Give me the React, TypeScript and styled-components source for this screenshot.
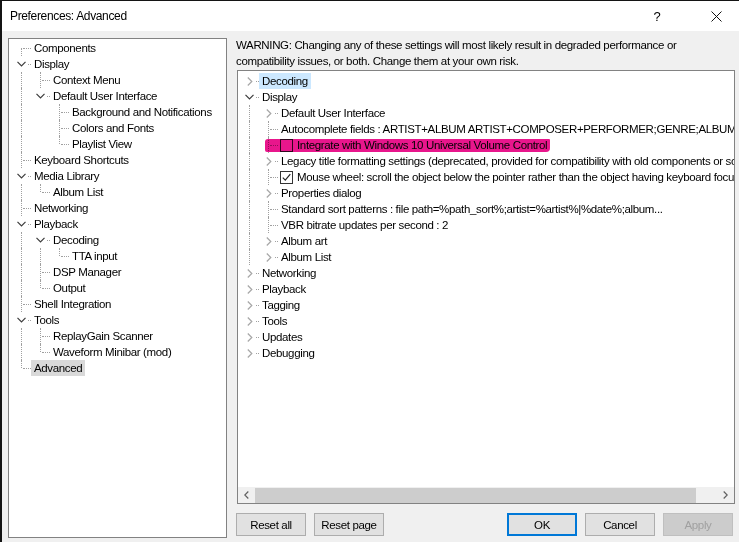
import React from "react";
import styled, { createGlobalStyle } from "styled-components";

type TreeNode = {
  label: string;
  open?: boolean;
  closed?: boolean;
  children?: TreeNode[];
  check?: "on" | "off";
  selected?: boolean;
  hot?: boolean;
  marked?: boolean;
};

type FlatRow = {
  node: TreeNode;
  depth: number;
  trail: boolean[];
  kind: "tee" | "last" | "first";
};

const leftTree: TreeNode[] = [
  { label: "Components" },
  {
    label: "Display",
    open: true,
    children: [
      { label: "Context Menu" },
      {
        label: "Default User Interface",
        open: true,
        children: [
          { label: "Background and Notifications" },
          { label: "Colors and Fonts" },
          { label: "Playlist View" },
        ],
      },
    ],
  },
  { label: "Keyboard Shortcuts" },
  { label: "Media Library", open: true, children: [{ label: "Album List" }] },
  { label: "Networking" },
  {
    label: "Playback",
    open: true,
    children: [
      { label: "Decoding", open: true, children: [{ label: "TTA input" }] },
      { label: "DSP Manager" },
      { label: "Output" },
    ],
  },
  { label: "Shell Integration" },
  {
    label: "Tools",
    open: true,
    children: [{ label: "ReplayGain Scanner" }, { label: "Waveform Minibar (mod)" }],
  },
  { label: "Advanced", selected: true },
];

const rightTree: TreeNode[] = [
  { label: "Decoding", closed: true, hot: true },
  {
    label: "Display",
    open: true,
    children: [
      { label: "Default User Interface", closed: true },
      { label: "Autocomplete fields : ARTIST+ALBUM ARTIST+COMPOSER+PERFORMER;GENRE;ALBUM..." },
      { label: "Integrate with Windows 10 Universal Volume Control", check: "off", marked: true },
      {
        label:
          "Legacy title formatting settings (deprecated, provided for compatibility with old components or scripts)",
        closed: true,
      },
      {
        label: "Mouse wheel: scroll the object below the pointer rather than the object having keyboard focus",
        check: "on",
      },
      { label: "Properties dialog", closed: true },
      { label: "Standard sort patterns : file path=%path_sort%;artist=%artist%|%date%;album..." },
      { label: "VBR bitrate updates per second : 2" },
      { label: "Album art", closed: true },
      { label: "Album List", closed: true },
    ],
  },
  { label: "Networking", closed: true },
  { label: "Playback", closed: true },
  { label: "Tagging", closed: true },
  { label: "Tools", closed: true },
  { label: "Updates", closed: true },
  { label: "Debugging", closed: true },
];

function flatten(nodes: TreeNode[], depth = 0, trail: boolean[] = []): FlatRow[] {
  const out: FlatRow[] = [];
  nodes.forEach((node, i) => {
    const last = i === nodes.length - 1;
    const kind = last ? "last" : depth === 0 && i === 0 ? "first" : "tee";
    out.push({ node, depth, trail, kind });
    if (node.open && node.children) {
      out.push(...flatten(node.children, depth + 1, [...trail, !last]));
    }
  });
  return out;
}

const GlobalStyle = createGlobalStyle`
  html, body {
    margin: 0;
    padding: 0;
    background: #f0f0f0;
  }
  body {
    font-family: "Liberation Sans", Arial, sans-serif;
    font-size: 11.5px;
    letter-spacing: -0.35px;
    color: #000;
  }
`;

const Frame = styled.div`
  width: 737px;
  height: 541px;
  border-left: 2px solid #141414;
  border-top: 1px solid #141414;
  background: #f0f0f0;
  display: flex;
  flex-direction: column;
  overflow: hidden;
`;

const TitleBar = styled.div`
  height: 30px;
  flex: none;
  background: #fff;
  display: flex;
  align-items: center;
  padding-left: 8px;
`;

const Title = styled.span`
  flex: 1;
  font-size: 12px;
  padding-bottom: 1px;
`;

const CaptionButton = styled.span`
  width: 46px;
  height: 30px;
  display: flex;
  align-items: center;
  justify-content: center;
  font-size: 13px;
  & + & {
    margin-left: 13px;
  }
`;

const Body = styled.div`
  flex: 1;
  display: flex;
  padding: 7px 4px 4px 6px;
  min-height: 0;
`;

const Pane = styled.div`
  background: #fff;
  border: 1px solid #828282;
  box-sizing: border-box;
`;

const PageTree = styled(Pane)`
  width: 219px;
  flex: none;
  padding: 1px 0 0 3px;
  overflow: hidden;
`;

const Main = styled.div`
  flex: 1;
  margin-left: 9px;
  display: flex;
  flex-direction: column;
  min-width: 0;
`;

const Warning = styled.p`
  margin: -1px 0 0;
  line-height: 16px;
  height: 33px;
`;

const SettingsPane = styled(Pane)`
  flex: 1;
  margin-left: 1px;
  display: flex;
  flex-direction: column;
  min-height: 0;
`;

const SettingsTree = styled.div`
  flex: 1;
  overflow: hidden;
  padding: 2px 0 0 2px;
`;

const Row = styled.div`
  position: relative;
  display: flex;
  align-items: center;
  height: 16px;
  white-space: nowrap;
`;

const Guide = styled.span<{ $line: "pipe" | "none" | "tee" | "last" | "first"; $stub?: boolean }>`
  position: relative;
  flex: none;
  width: 19px;
  height: 16px;
  &::before {
    content: "";
    display: ${(p) => (p.$line === "none" ? "none" : "block")};
    position: absolute;
    left: 9px;
    top: ${(p) => (p.$line === "first" ? "8px" : "0")};
    bottom: ${(p) => (p.$line === "last" ? "8px" : "0")};
    border-left: 1px dotted #a0a0a0;
  }
  &::after {
    content: "";
    display: ${(p) => (p.$stub ? "block" : "none")};
    position: absolute;
    left: 11px;
    right: 0;
    top: 8px;
    border-top: 1px dotted #a0a0a0;
  }
`;

const Expander = styled.span`
  position: absolute;
  z-index: 1;
  left: 3px;
  top: 0;
  width: 13px;
  height: 16px;
  background: #fff;
  display: flex;
  align-items: center;
  justify-content: center;
`;

const Label = styled.span<{ $selected?: boolean; $hot?: boolean }>`
  height: 16px;
  line-height: 16px;
  padding: 0 3px;
  background: ${(p) => (p.$selected ? "#d9d9d9" : p.$hot ? "#cce8ff" : "transparent")};
`;

const CheckBox = styled.span`
  width: 11px;
  height: 11px;
  flex: none;
  margin: 0 4px 0 2px;
  border: 1px solid #333;
  background: #fff;
  display: flex;
  align-items: center;
  justify-content: center;
`;

const CheckLabel = styled.span`
  line-height: 16px;
`;

const Marker = styled.span`
  position: absolute;
  left: 25px;
  top: 2px;
  width: 285px;
  height: 13px;
  background: #e8168c;
  border-radius: 3px 1px 4px 2px;
  mix-blend-mode: multiply;
  pointer-events: none;
`;

const ScrollBar = styled.div`
  height: 16px;
  flex: none;
  background: #f0f0f0;
  display: flex;
  align-items: center;
`;

const ScrollArrow = styled.span`
  width: 17px;
  height: 16px;
  flex: none;
  display: flex;
  align-items: center;
  justify-content: center;
`;

const Thumb = styled.span`
  width: 441px;
  height: 15px;
  background: #cdcdcd;
`;

const Track = styled.span`
  flex: 1;
`;

const ButtonRow = styled.div`
  display: flex;
  gap: 8px;
  margin: 9px 0 2px;
  padding-right: 2px;
`;

const Spacer = styled.span`
  flex: 1;
`;

const Button = styled.button<{ $primary?: boolean }>`
  width: 70px;
  height: 23px;
  box-sizing: border-box;
  font-family: inherit;
  font-size: 11.5px;
  letter-spacing: -0.35px;
  color: #000;
  background: #e1e1e1;
  border: ${(p) => (p.$primary ? "2px solid #0078d7" : "1px solid #adadad")};
  padding: 0;
  &:disabled {
    background: #cccccc;
    border-color: #bfbfbf;
    color: #a0a0a0;
  }
`;

const ChevronDown = () => (
  <svg width="9" height="6" viewBox="0 0 9 6">
    <path d="M0.5 0.8 L4.5 4.8 L8.5 0.8" fill="none" stroke="#3c3c3c" strokeWidth="1.2" />
  </svg>
);

const ChevronRight = () => (
  <svg width="6" height="9" viewBox="0 0 6 9">
    <path d="M0.8 0.5 L4.8 4.5 L0.8 8.5" fill="none" stroke="#a6a6a6" strokeWidth="1.2" />
  </svg>
);

const Tick = () => (
  <svg width="9" height="9" viewBox="0 0 9 9">
    <path d="M0.8 4.6 L3.3 7.2 L8.3 1.2" fill="none" stroke="#222" strokeWidth="1.2" />
  </svg>
);

function Tree({ nodes }: { nodes: TreeNode[] }) {
  return (
    <>
      {flatten(nodes).map((r, i) => {
        const { node } = r;
        return (
          <Row key={i}>
            {r.trail.map((more, j) => (
              <Guide key={j} $line={more ? "pipe" : "none"} />
            ))}
            <Guide $line={r.kind} $stub>
              {(node.open || node.closed) && (
                <Expander>{node.open ? <ChevronDown /> : <ChevronRight />}</Expander>
              )}
            </Guide>
            {node.marked && <Marker />}
            {node.check ? (
              <>
                <CheckBox>{node.check === "on" && <Tick />}</CheckBox>
                <CheckLabel>{node.label}</CheckLabel>
              </>
            ) : (
              <Label $selected={node.selected} $hot={node.hot}>
                {node.label}
              </Label>
            )}
          </Row>
        );
      })}
    </>
  );
}

export default function App() {
  return (
    <>
      <GlobalStyle />
      <Frame>
        <TitleBar>
          <Title>Preferences: Advanced</Title>
          <CaptionButton>?</CaptionButton>
          <CaptionButton>
            <svg width="11" height="11" viewBox="0 0 11 11">
              <path d="M0.5 0.5 L10.5 10.5 M10.5 0.5 L0.5 10.5" stroke="#111" strokeWidth="1" />
            </svg>
          </CaptionButton>
        </TitleBar>
        <Body>
          <PageTree>
            <Tree nodes={leftTree} />
          </PageTree>
          <Main>
            <Warning>
              WARNING: Changing any of these settings will most likely result in degraded performance or
              compatibility issues, or both. Change them at your own risk.
            </Warning>
            <SettingsPane>
              <SettingsTree>
                <Tree nodes={rightTree} />
              </SettingsTree>
              <ScrollBar>
                <ScrollArrow>
                  <svg width="5" height="8" viewBox="0 0 5 8">
                    <path d="M4.3 0.5 L0.8 4 L4.3 7.5" fill="none" stroke="#606060" strokeWidth="1.2" />
                  </svg>
                </ScrollArrow>
                <Thumb />
                <Track />
                <ScrollArrow>
                  <svg width="5" height="8" viewBox="0 0 5 8">
                    <path d="M0.7 0.5 L4.2 4 L0.7 7.5" fill="none" stroke="#606060" strokeWidth="1.2" />
                  </svg>
                </ScrollArrow>
              </ScrollBar>
            </SettingsPane>
            <ButtonRow>
              <Button>Reset all</Button>
              <Button>Reset page</Button>
              <Spacer />
              <Button $primary>OK</Button>
              <Button>Cancel</Button>
              <Button disabled>Apply</Button>
            </ButtonRow>
          </Main>
        </Body>
      </Frame>
    </>
  );
}
